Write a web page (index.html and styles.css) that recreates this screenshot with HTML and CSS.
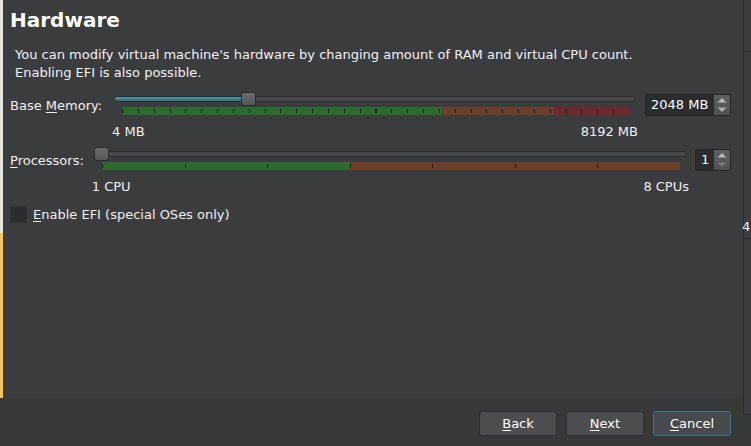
FILE: index.html
```html
<!DOCTYPE html>
<html>
<head>
<meta charset="utf-8">
<title>Hardware</title>
<link rel="stylesheet" href="styles.css">
</head>
<body>
<div class="screen">
  <div class="dialog">
    <div class="page">
      <div class="edge"></div>
      <div class="content">
        <h1 class="title">Hardware</h1>
        <p class="desc">You can modify virtual machine's hardware by changing amount of RAM and virtual CPU count.<br>Enabling EFI is also possible.</p>

        <div class="row row-mem">
          <label class="label label-mem">Base <u>M</u>emory:</label>
          <div class="slider">
            <div class="track" style="--pos:0.2496">
              <div class="groove"><div class="fill"></div></div>
              <div class="handle"></div>
            </div>
            <div class="scale scale-mem"></div>
            <div class="limits"><span>4 MB</span><span>8192 MB</span></div>
          </div>
          <div class="spin spin-mem">
            <span class="val">2048 MB</span>
            <span class="arrows"><svg width="16" height="20" viewBox="0 0 16 20"><path d="M3.5 7.5 L8 3 L12.5 7.5 Z" fill="#b8b9ba"/><path d="M3.5 12.5 L8 17 L12.5 12.5 Z" fill="#aeafb0"/></svg></span>
          </div>
        </div>

        <div class="row row-cpu">
          <label class="label"><u>P</u>rocessors:</label>
          <div class="slider">
            <div class="track" style="--pos:0">
              <div class="groove"><div class="fill"></div></div>
              <div class="handle"></div>
            </div>
            <div class="scale scale-cpu"></div>
            <div class="limits"><span>1 CPU</span><span>8 CPUs</span></div>
          </div>
          <div class="spin spin-cpu">
            <span class="val">1</span>
            <span class="arrows"><svg width="16" height="20" viewBox="0 0 16 20"><path d="M3.5 7.5 L8 3 L12.5 7.5 Z" fill="#b8b9ba"/><path d="M3.5 12.5 L8 17 L12.5 12.5 Z" fill="#77787a"/></svg></span>
          </div>
        </div>

        <div class="check">
          <span class="box"></span>
          <span><u>E</u>nable EFI (special OSes only)</span>
        </div>
      </div>
    </div>
    <div class="footer">
      <button class="btn"><u>B</u>ack</button>
      <button class="btn"><u>N</u>ext</button>
      <button class="btn btn-focus"><u>C</u>ancel</button>
    </div>
  </div>
  <div class="behind">
    <div class="b1"></div>
    <div class="b2"><span class="glyph">4</span></div>
    <div class="b3"></div>
    <div class="b4"></div>
  </div>
</div>
</body>
</html>
```

FILE: styles.css
```css
html, body {
  margin: 0;
  padding: 0;
}
body {
  background: #3b3c3e;
  font-family: "DejaVu Sans", "Noto Sans", sans-serif;
  font-size: 13px;
  color: #f0f0f0;
}
u {
  text-decoration: underline;
  text-underline-offset: 2px;
}
.screen {
  display: flex;
  width: 751px;
  height: 446px;
  overflow: hidden;
}
.dialog {
  width: 743px;
  flex: none;
  display: flex;
  flex-direction: column;
}
.page {
  height: 398px;
  display: flex;
  background: #3b3c3e;
}
.edge {
  width: 3px;
  flex: none;
  background: linear-gradient(to bottom, #e6e4df 0, #e6e4df 233px, #f2c462 233px, #f2c462 100%);
}
.content {
  flex: 1;
  padding: 8px 12px 0 7px;
}
.title {
  margin: 0;
  font-size: 20px;
  line-height: 24px;
  font-weight: bold;
  color: #ffffff;
}
.desc {
  margin: 14px 0 0 5px;
  line-height: 17.5px;
  color: #f2f2f2;
}
.row {
  display: flex;
  align-items: flex-start;
  gap: 10px;
}
.row-mem {
  margin-top: 11px;
}
.row-cpu {
  margin-top: 6px;
}
.label {
  line-height: 19px;
  margin-top: 4px;
  white-space: nowrap;
}
.label-mem {
  padding-right: 2px;
}
.slider {
  flex: 1;
  min-width: 0;
}
.track {
  position: relative;
  height: 14px;
  box-sizing: border-box;
  padding-top: 4px;
}
.groove {
  height: 6px;
  box-sizing: border-box;
  border: 1px solid #2a2b2d;
  border-radius: 3px;
  background: #47484a;
  overflow: hidden;
}
.fill {
  height: 100%;
  width: calc((100% - 15px) * var(--pos) + 7px);
  background: linear-gradient(#5299a6, #2f6b77);
}
.handle {
  position: absolute;
  top: 0;
  left: calc((100% - 15px) * var(--pos));
  width: 15px;
  height: 14px;
  box-sizing: border-box;
  border: 1px solid #2a2b2d;
  border-radius: 3px;
  background: linear-gradient(#6c6d6f, #545557);
}
.scale {
  height: 8px;
  margin: 1px 7px 0 8px;
}
.scale-mem {
  background:
    repeating-linear-gradient(to right, #1b1d1b 0, #1b1d1b 1px, transparent 1px, transparent 3.125%) 0 2px / 100% 4px no-repeat,
    linear-gradient(to right, #2d6a2f 0, #2d6a2f 63%, #6a3f2c 63%, #6a3f2c 85.3%, #6c282a 85.3%, #6c282a 100%);
}
.scale-cpu {
  background:
    repeating-linear-gradient(to right, #1b1d1b 0, #1b1d1b 1px, transparent 1px, transparent 14.2857%) 0 2px / 100% 4px no-repeat,
    linear-gradient(to right, #2d6a2f 0, #2d6a2f 42.86%, #6a3f2c 42.86%, #6a3f2c 100%);
}
.limits {
  display: flex;
  justify-content: space-between;
  margin: 7px -2px 0 -2px;
  line-height: 19px;
}
.spin {
  flex: none;
  display: flex;
  height: 22px;
  margin-top: 2px;
  margin-left: -1px;
  box-sizing: border-box;
  border: 1px solid #232426;
  border-radius: 3px;
  background: #2b2c2e;
  overflow: hidden;
}
.spin-mem {
  width: 86px;
}
.spin-cpu {
  width: 36px;
  margin-left: -2px;
}
.val {
  flex: 1;
  padding-left: 5px;
  line-height: 20px;
  color: #ffffff;
  white-space: nowrap;
}
.arrows {
  width: 16px;
  height: 20px;
  flex: none;
  background: linear-gradient(#5e5f61, #505153);
}
.arrows svg {
  display: block;
}
.check {
  display: flex;
  align-items: center;
  gap: 6px;
  margin-top: 9px;
  line-height: 19px;
}
.box {
  width: 17px;
  height: 17px;
  box-sizing: border-box;
  border: 1px solid #313234;
  background: #2b2c2e;
  flex: none;
}
.footer {
  height: 48px;
  box-sizing: border-box;
  background: #373938;
  display: flex;
  justify-content: flex-end;
  align-items: flex-start;
  gap: 9px;
  padding: 13px 12px 0 0;
}
.btn {
  width: 78px;
  height: 25px;
  box-sizing: border-box;
  padding: 0;
  border: 1px solid #2e2f31;
  border-radius: 3px;
  background: #4c4d4f;
  color: #ffffff;
  font-family: "DejaVu Sans", "Noto Sans", sans-serif;
  font-size: 13px;
  line-height: 21px;
}
.btn-focus {
  border-color: #3d7480;
  background: #464a4c;
}
.behind {
  width: 8px;
  flex: none;
  display: flex;
  flex-direction: column;
  background: #3b3c3e;
}
.b1 {
  height: 51px;
  border-left: 1px solid #2a2b2d;
  border-bottom: 1px solid #2a2b2d;
}
.b2 {
  height: 186px;
  border-left: 1px solid #2a2b2d;
  border-bottom: 1px solid #2a2b2d;
  display: flex;
  align-items: flex-end;
}
.glyph {
  margin-left: -2px;
  margin-bottom: 4px;
  line-height: 15px;
  color: #f0f0f0;
}
.b3 {
  height: 175px;
  border-left: 1px solid #2a2b2d;
  border-bottom: 1px solid #2a2b2d;
}
.b4 {
  flex: 1;
  background: #373938;
}
```
